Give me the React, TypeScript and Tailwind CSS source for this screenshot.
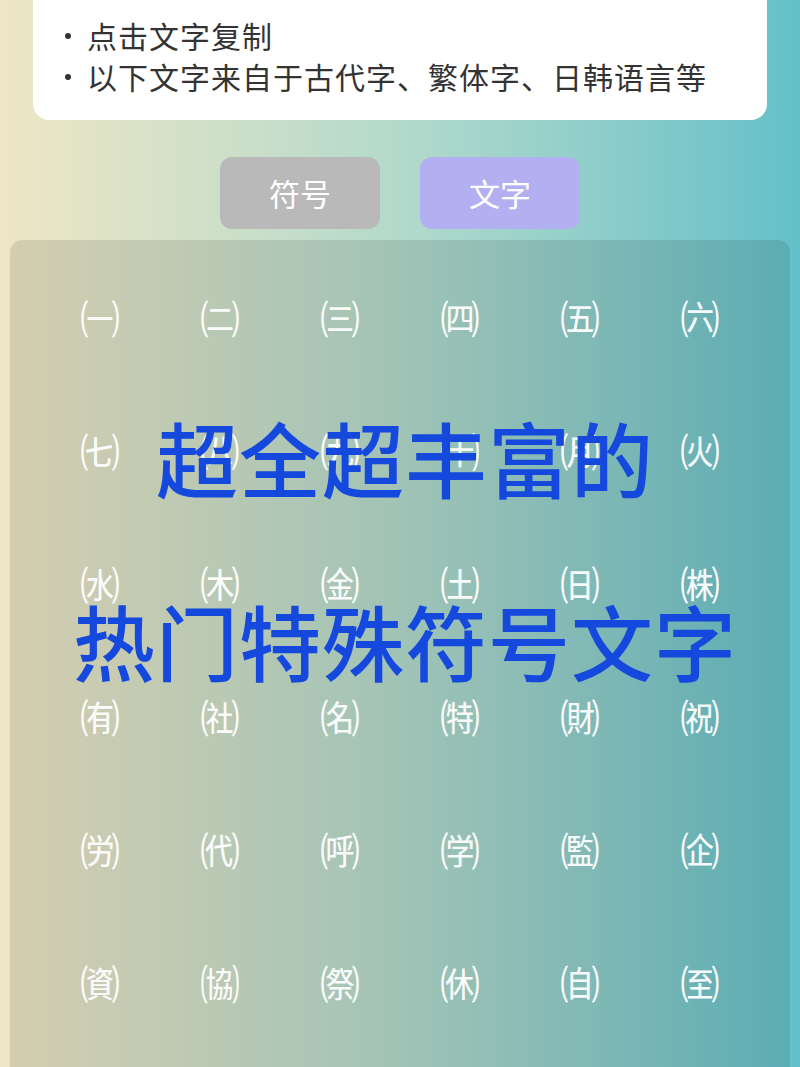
const chars = [
  "㈠", "㈡", "㈢", "㈣", "㈤", "㈥",
  "㈦", "㈧", "㈨", "㈩", "㈪", "㈫",
  "㈬", "㈭", "㈮", "㈯", "㈰", "㈱",
  "㈲", "㈳", "㈴", "㈵", "㈶", "㈷",
  "㈸", "㈹", "㈺", "㈻", "㈼", "㈽",
  "㈾", "㈿", "㉀", "㉁", "㉂", "㉃",
];

const tips = ["点击文字复制", "以下文字来自于古代字、繁体字、日韩语言等"];

export default function App() {
  return (
    <main
      className="relative h-[1067px] w-[800px] overflow-hidden bg-gradient-to-r from-[#eee6c5] via-[#b3dacb] to-[#63c0c9]"
      style={{ fontFamily: '"Noto Sans CJK SC", "Noto Sans", sans-serif' }}
    >
      {/* tips card */}
      <div className="mx-[33px] rounded-b-2xl bg-white pb-[23px] pl-[32px] pt-[15px] text-[30px] leading-[41px] tracking-[1px] text-[#333333]">
        {tips.map((t) => (
          <div key={t} className="flex items-center">
            <span className="mr-[16px] h-[6px] w-[6px] rounded-full bg-[#333333]" />
            <span>{t}</span>
          </div>
        ))}
      </div>

      {/* tabs */}
      <div className="mt-[37px] flex justify-center gap-[40px]">
        <button className="h-[72px] w-[160px] rounded-xl bg-[#b9b9b9] text-[31px] text-white">
          符号
        </button>
        <button className="h-[72px] w-[160px] rounded-xl bg-[#b3b0f1] text-[31px] text-white">
          文字
        </button>
      </div>

      {/* character grid */}
      <section className="mx-[10px] mt-[11px] rounded-t-xl bg-black/10 px-[30px] pb-10 pt-[10px]">
        <div className="grid grid-cols-6">
          {chars.map((c) => (
            <div
              key={c}
              className="flex h-[133px] items-center justify-center text-[40px] leading-none text-white/95"
            >
              {c}
            </div>
          ))}
        </div>
      </section>

      {/* headline overlay */}
      <div className="pointer-events-none absolute inset-x-0 top-[416px] flex flex-col items-center gap-[101px] pl-[10px] text-[82px] font-medium leading-none tracking-[1px] text-[#1548dd]">
        <span>超全超丰富的</span>
        <span>热门特殊符号文字</span>
      </div>
    </main>
  );
}
